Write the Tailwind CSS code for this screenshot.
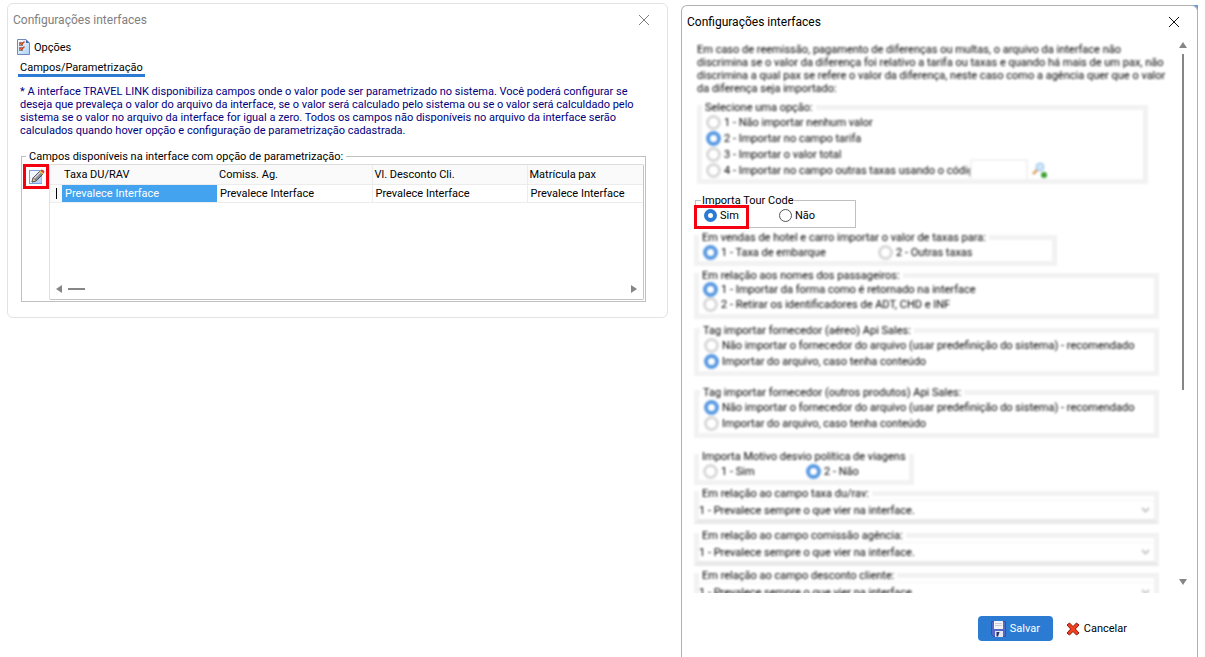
<!DOCTYPE html>
<html lang="pt-BR">
<head>
    <meta charset="UTF-8">
    <meta name="viewport" content="width=device-width, initial-scale=1.0">
    <title>Configurações interfaces</title>
    <script src="https://cdn.jsdelivr.net/npm/@tailwindcss/browser@4"></script>
</head>
<body class="bg-white text-black text-[11px] leading-[13px] font-['Roboto',sans-serif]">

    <div class="h-screen flex items-start gap-[13px] px-[7px] overflow-hidden">

        <!-- Left window -->
        <section class="flex-[659_1_0%] min-w-0 mt-[3px] border border-[#e3e3e3] rounded-md pb-[15px]">
            <div class="h-8 flex items-center justify-between pl-[5px] pr-[17px]">
                <h1 class="text-xs text-[#808080]">Configurações interfaces</h1>
                <button type="button" aria-label="Fechar">
                    <svg width="12" height="12" viewBox="0 0 12 12" fill="none" stroke="#808080" stroke-width="1"><path d="M1 1l10 10M11 1L1 11"/></svg>
                </button>
            </div>

            <div class="pl-[9px] h-[22px] flex items-center gap-1">
                <svg width="13" height="16" viewBox="0 0 13 16">
                    <defs><linearGradient id="page" x1="0" y1="0" x2="1" y2="1"><stop offset="0" stop-color="#fff"/><stop offset="1" stop-color="#a8d0f8"/></linearGradient></defs>
                    <path d="M.5.5h8.500l3.500 3.500v11.500H.5z" fill="url(#page)" stroke="#7088b8"/>
                    <path d="M9 .5v3.500h3.500z" fill="#4a6ca8"/>
                    <rect x="2.500" y="3.500" width="3" height="3" fill="#ddd" stroke="#888"/>
                    <rect x="2.500" y="8.500" width="3" height="3" fill="#ddd" stroke="#888"/>
                    <path d="M3 4l1.500 1.500L7.500 2.500M3 9l1.500 1.500L7.500 7.500" fill="none" stroke="#d8421c" stroke-width="1.300"/>
                </svg>
                <span>Opções</span>
            </div>

            <div class="pl-[10px]">
                <button type="button" class="block px-[2px] pt-[3px] pb-[1px] h-[19px] border-b-[3px] border-[#2b7bd3]">Campos/Parametrização</button>
            </div>

            <p class="mt-2 pl-3 text-[#000080]">
                * A interface TRAVEL LINK disponibiliza campos onde o valor pode ser parametrizado no sistema. Você poderá configurar se<br>
                deseja que prevaleça o valor do arquivo da interface, se o valor será calculado pelo sistema ou se o valor será calculdado pelo<br>
                sistema se o valor no arquivo da interface for igual a zero. Todos os campos não disponíveis no arquivo da interface serão<br>
                calculados quando hover opção e configuração de parametrização cadastrada.
            </p>

            <fieldset class="mt-[13px] ml-[13px] mr-[21px] border border-[#c0c0c0] min-w-0">
                <legend class="ml-[4px] px-[3px]">Campos disponíveis na interface com opção de parametrização:</legend>
                <div class="flex pl-[1px] pb-[1px] pr-[1px] mt-[1px]">
                    <button type="button" aria-label="Editar" class="flex-none w-[26px] h-[25px] border-[3px] border-[#f5000f] flex items-center justify-center">
                        <svg width="17" height="17" viewBox="0 0 17 17">
                            <rect x="1.500" y="2.500" width="12" height="13" fill="#f2f7ff" stroke="#7aa0e0"/>
                            <path d="M3 15h10.500V8z" fill="#b8d4f8"/>
                            <path d="M4 14l1.200-4.200L12 3l3 3-6.800 6.800z" fill="#8a8f98" stroke="#44484f"/>
                            <path d="M6 10.500L12.500 4" stroke="#d8dce2" stroke-width="1.200"/>
                            <path d="M4 14l1.200-4.200 3 3z" fill="#f0c890" stroke="#44484f" stroke-width=".6"/>
                            <path d="M11.500 3.500l1-1 3 3-1 1z" fill="#f0c040"/>
                            <path d="M12.500 2.500l1-1q2.500 0 3 2.500l-1 1.500z" fill="#d83c30"/>
                        </svg>
                    </button>
                    <div class="flex-1 min-w-0 h-[136px] border border-t-[#dcdcdc] border-l-[#e0e0e0] border-[#c4c4c4] rounded-xs flex flex-col justify-between">
                        <table class="w-full table-fixed border-collapse text-left">
                            <colgroup>
                                <col class="w-3">
                                <col class="w-[155px]">
                                <col class="w-[155px]">
                                <col class="w-[155px]">
                                <col>
                            </colgroup>
                            <thead>
                                <tr class="h-[19px] bg-[#fafafa] border-b border-[#ececec]">
                                    <th></th>
                                    <th class="font-normal pl-[2px]">Taxa DU/RAV</th>
                                    <th class="font-normal pl-[2px]">Comiss. Ag.</th>
                                    <th class="font-normal pl-[2px] border-l border-[#ececec]">Vl. Desconto Cli.</th>
                                    <th class="font-normal pl-[2px] border-l border-[#ececec]">Matrícula pax</th>
                                </tr>
                            </thead>
                            <tbody>
                                <tr class="h-[18px] border-b border-[#ececec]">
                                    <td class="bg-[#fafafa]"><span class="block ml-[6px] w-px h-[11px] bg-black"></span></td>
                                    <td class="pl-[3px] bg-[#43a3ef] text-white">Prevalece Interface</td>
                                    <td class="pl-[3px]">Prevalece Interface</td>
                                    <td class="pl-[3px] border-l border-[#ececec]">Prevalece Interface</td>
                                    <td class="pl-[3px] border-l border-[#ececec]">Prevalece Interface</td>
                                </tr>
                            </tbody>
                        </table>
                        <div class="h-[20px] flex items-center justify-between px-[6px]">
                            <div class="flex items-center gap-[6px]">
                                <svg width="6" height="8" viewBox="0 0 6 8" fill="#868686"><path d="M6 0v8L0 4z"/></svg>
                                <span class="w-[17px] h-[2px] bg-[#868686]"></span>
                            </div>
                            <svg width="6" height="8" viewBox="0 0 6 8" fill="#868686"><path d="M0 0v8l6-4z"/></svg>
                        </div>
                    </div>
                </div>
            </fieldset>
        </section>

        <!-- Right window -->
        <section class="relative flex-[517_1_0%] min-w-0 mt-[5px] h-[calc(100vh-5px)] flex flex-col">
            <span class="absolute top-0 right-0 size-2 bg-[#5a9bea]"></span>
            <div class="relative flex-1 min-h-0 flex flex-col bg-white border border-b-0 border-[#b0b0b0] rounded-t-md">
            <div class="h-8 flex-none flex items-center justify-between pl-[5px] pr-[17px]">
                <h2 class="text-xs">Configurações interfaces</h2>
                <button type="button" aria-label="Fechar">
                    <svg width="12" height="12" viewBox="0 0 12 12" fill="none" stroke="#111" stroke-width="1"><path d="M1 1l10 10M11 1L1 11"/></svg>
                </button>
            </div>

            <div class="flex-1 min-h-0 flex">
                <div class="flex-1 min-w-0 overflow-hidden pt-[5px] pl-3 pr-[20px]">
                    <p class="blur-[1px] pl-[3px] whitespace-nowrap">
                        Em caso de reemissão, pagamento de diferenças ou multas, o arquivo da interface não<br>
                        discrimina se o valor da diferença foi relativo a tarifa ou taxas e quando há mais de um pax, não<br>
                        discrimina a qual pax se refere o valor da diferença, neste caso como a agência quer que o valor<br>
                        da diferença seja importado:
                    </p>

                    <fieldset class="blur-[1px] mt-[6px] ml-[3px] mr-[11px] border-[5px] border-[#f2f2f2] pl-1 pb-px">
                        <legend class="-ml-1 px-[3px] whitespace-nowrap">Selecione uma opção:</legend>
                        <label class="h-4 flex items-center gap-[3px]"><input type="radio" name="dif" class="appearance-none size-[15px] rounded-full border-[3px] border-[#d8d8d8]">1 - Não importar nenhum valor</label>
                        <label class="h-4 flex items-center gap-[3px]"><input type="radio" name="dif" checked class="appearance-none size-[15px] rounded-full border-4 border-[#5a9ae2]">2 - Importar no campo tarifa</label>
                        <label class="h-4 flex items-center gap-[3px]"><input type="radio" name="dif" class="appearance-none size-[15px] rounded-full border-[3px] border-[#d8d8d8]">3 - Importar o valor total</label>
                        <div class="h-4 flex items-center">
                            <label class="w-[264px] flex items-center gap-[3px] whitespace-nowrap"><input type="radio" name="dif" class="flex-none appearance-none size-[15px] rounded-full border-[3px] border-[#d8d8d8]">4 - Importar no campo outras taxas usando o códig</label>
                            <input type="text" aria-label="Código" class="w-[58px] h-[22px] -my-1 bg-white border-2 border-[#f2f2f2]">
                            <svg class="ml-1" width="15" height="16" viewBox="0 0 15 16"><path d="M1 12l5-5" stroke="#e0a060" stroke-width="2.500"/><circle cx="8" cy="5" r="4" fill="#cfe6fa" stroke="#94bde6"/><circle cx="12" cy="13" r="3" fill="#38a030"/></svg>
                        </div>
                    </fieldset>

                    <fieldset class="mt-[10px] ml-px w-[161px] border border-[#c0c0c0] pb-1">
                        <legend class="ml-[5px] px-px">Importa Tour Code</legend>
                        <div class="relative h-4 flex items-center pl-2">
                            <span class="absolute -left-[2px] -top-[2px] w-[55px] h-6 border-[3px] border-[#f5000f]"></span>
                            <label class="w-[75px] flex items-center gap-[3px]"><input type="radio" name="tour" checked class="appearance-none size-[13px] rounded-full border-4 border-[#2b7bd3]">Sim</label>
                            <label class="flex items-center gap-[3px]"><input type="radio" name="tour" class="appearance-none size-[13px] rounded-full border border-[#555]">Não</label>
                        </div>
                    </fieldset>

                    <fieldset class="blur-[1px] mt-[3px] w-[363px] border-[5px] border-[#f2f2f2] pl-1 pb-px">
                        <legend class="-ml-1 px-[3px] whitespace-nowrap">Em vendas de hotel e carro importar o valor de taxas para:</legend>
                        <div class="h-4 flex items-center">
                            <label class="w-[175px] flex items-center gap-[3px]"><input type="radio" name="hotel" checked class="appearance-none size-[15px] rounded-full border-4 border-[#5a9ae2]">1 - Taxa de embarque</label>
                            <label class="flex items-center gap-[3px]"><input type="radio" name="hotel" class="appearance-none size-[15px] rounded-full border-[3px] border-[#d8d8d8]">2 - Outras taxas</label>
                        </div>
                    </fieldset>

                    <fieldset class="blur-[1px] mt-[3px] border-[5px] border-[#f2f2f2] pl-1 pb-[2px]">
                        <legend class="-ml-1 px-[3px] whitespace-nowrap">Em relação aos nomes dos passageiros:</legend>
                        <label class="h-[15px] flex items-center gap-[3px]"><input type="radio" name="nomes" checked class="appearance-none size-[15px] rounded-full border-4 border-[#5a9ae2]">1 - Importar da forma como é retornado na interface</label>
                        <label class="h-[15px] flex items-center gap-[3px]"><input type="radio" name="nomes" class="appearance-none size-[15px] rounded-full border-[3px] border-[#d8d8d8]">2 - Retirar os identificadores de ADT, CHD e INF</label>
                    </fieldset>

                    <fieldset class="blur-[1px] mt-[5px] border-[5px] border-[#f2f2f2] pl-[5px] pb-[2px]">
                        <legend class="-ml-1 px-[3px] whitespace-nowrap">Tag importar fornecedor (aéreo) Api Sales:</legend>
                        <label class="h-4 flex items-center gap-[3px]"><input type="radio" name="aereo" class="appearance-none size-[15px] rounded-full border-[3px] border-[#d8d8d8]">Não importar o fornecedor do arquivo (usar predefinição do sistema) - recomendado</label>
                        <label class="h-4 flex items-center gap-[3px]"><input type="radio" name="aereo" checked class="appearance-none size-[15px] rounded-full border-4 border-[#5a9ae2]">Importar do arquivo, caso tenha conteúdo</label>
                    </fieldset>

                    <fieldset class="blur-[1px] mt-[10px] border-[5px] border-[#f2f2f2] pl-[5px] pb-[2px]">
                        <legend class="-ml-1 px-[3px] whitespace-nowrap">Tag importar fornecedor (outros produtos) Api Sales:</legend>
                        <label class="h-4 flex items-center gap-[3px]"><input type="radio" name="outros" checked class="appearance-none size-[15px] rounded-full border-4 border-[#5a9ae2]">Não importar o fornecedor do arquivo (usar predefinição do sistema) - recomendado</label>
                        <label class="h-4 flex items-center gap-[3px]"><input type="radio" name="outros" class="appearance-none size-[15px] rounded-full border-[3px] border-[#d8d8d8]">Importar do arquivo, caso tenha conteúdo</label>
                    </fieldset>

                    <fieldset class="blur-[1px] mt-3 w-[220px] border-[5px] border-[#f2f2f2] pl-1 pb-px">
                        <legend class="-ml-1 px-[3px] whitespace-nowrap">Importa Motivo desvio política de viagens</legend>
                        <div class="h-4 flex items-center">
                            <label class="w-[103px] flex items-center gap-[3px]"><input type="radio" name="motivo" class="appearance-none size-[15px] rounded-full border-[3px] border-[#d8d8d8]">1 - Sim</label>
                            <label class="flex items-center gap-[3px]"><input type="radio" name="motivo" checked class="appearance-none size-[15px] rounded-full border-4 border-[#5a9ae2]">2 - Não</label>
                        </div>
                    </fieldset>

                    <fieldset class="blur-[1px] mt-[2px] border-[5px] border-b-[#e9e9e9] border-[#f2f2f2]">
                        <legend class="px-[3px] whitespace-nowrap">Em relação ao campo taxa du/rav:</legend>
                        <div class="relative">
                            <select aria-label="Em relação ao campo taxa du/rav" class="block appearance-none w-full h-[19px] border-t border-[#f5f5f5] bg-white">
                                <option>1 - Prevalece sempre o que vier na interface.</option>
                            </select>
                            <svg class="absolute right-1 top-[7px]" width="9" height="6" viewBox="0 0 9 6" fill="none" stroke="#c8c8c8" stroke-width="2"><path d="M1 1l3.500 3.500L8 1"/></svg>
                        </div>
                    </fieldset>

                    <fieldset class="blur-[1px] mt-[5px] border-[5px] border-b-[#e9e9e9] border-[#f2f2f2]">
                        <legend class="px-[3px] whitespace-nowrap">Em relação ao campo comissão agência:</legend>
                        <div class="relative">
                            <select aria-label="Em relação ao campo comissão agência" class="block appearance-none w-full h-[19px] border-t border-[#f5f5f5] bg-white">
                                <option>1 - Prevalece sempre o que vier na interface.</option>
                            </select>
                            <svg class="absolute right-1 top-[7px]" width="9" height="6" viewBox="0 0 9 6" fill="none" stroke="#c8c8c8" stroke-width="2"><path d="M1 1l3.500 3.500L8 1"/></svg>
                        </div>
                    </fieldset>

                    <fieldset class="blur-[1px] mt-[3px] border-[5px] border-b-[#e9e9e9] border-[#f2f2f2]">
                        <legend class="px-[3px] whitespace-nowrap">Em relação ao campo desconto cliente:</legend>
                        <div class="relative">
                            <select aria-label="Em relação ao campo desconto cliente" class="block appearance-none w-full h-[19px] border-t border-[#f5f5f5] bg-white">
                                <option>1 - Prevalece sempre o que vier na interface.</option>
                            </select>
                            <svg class="absolute right-1 top-[7px]" width="9" height="6" viewBox="0 0 9 6" fill="none" stroke="#c8c8c8" stroke-width="2"><path d="M1 1l3.500 3.500L8 1"/></svg>
                        </div>
                    </fieldset>
                </div>

                <!-- Scrollbar -->
                <div class="flex-none w-2 mr-[10px] pt-[4px] pb-[8px] flex flex-col items-center">
                    <svg width="8" height="6" viewBox="0 0 8 6" fill="#868686"><path d="M0 6h8L4 0z"/></svg>
                    <div class="flex-1 w-[2px] mt-[6px]"><div class="h-[64%] bg-[#868686]"></div></div>
                    <svg width="8" height="6" viewBox="0 0 8 6" fill="#868686"><path d="M0 0h8L4 6z"/></svg>
                </div>
            </div>

            <div class="flex-none h-16 pt-[23px] pr-[70px] flex items-start justify-end gap-[13px]">
                <button type="button" class="h-[25px] w-[75px] rounded bg-[#2b7bd3] text-white flex items-center justify-center gap-1">
                    <svg width="15" height="16" viewBox="0 0 15 16">
                        <path d="M.5.5h14v15H2.500L.5 13.500z" fill="#5468c8" stroke="#3c4ca8"/>
                        <path d="M3 0h9v8H3z" fill="#f2f2f4"/>
                        <path d="M4 2.500h7M4 4.500h7" stroke="#c8ccd8"/>
                        <path d="M4 10h8v6H4z" fill="#e4e6f0"/>
                        <path d="M5.500 11h3L7 15.500H5.500z" fill="#262c70"/>
                    </svg>
                    Salvar
                </button>
                <button type="button" class="h-[25px] flex items-center gap-1">
                    <svg width="14" height="14" viewBox="0 0 14 14"><path d="M3.500 1L7 4.500 10.500 1 13 3 9.300 7 13 11l-2.500 2L7 9.500 3.500 13 1 11l3.700-4L1 3z" fill="#f0401c" stroke="#90180c"/></svg>
                    Cancelar
                </button>
            </div>
            </div>
        </section>
    </div>

</body>
</html>
